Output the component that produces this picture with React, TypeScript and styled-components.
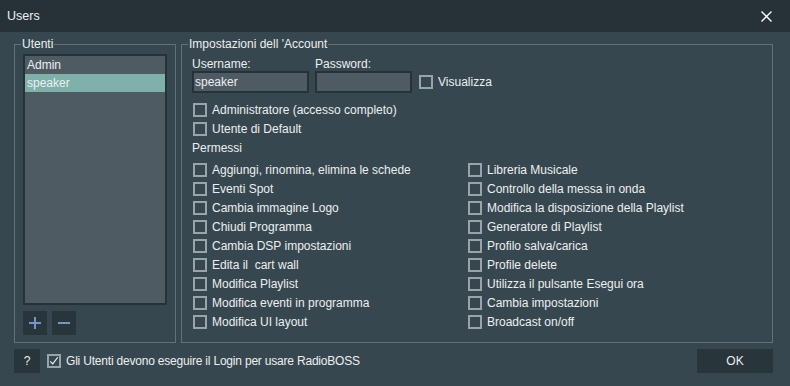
import React, { useState } from 'react';
import styled, { createGlobalStyle } from 'styled-components';

const colors = {
  title: '#263238',
  body: '#37474f',
  field: '#4f5b62',
  fieldBorder: '#263238',
  groupBorder: '#627279',
  text: '#eceff0',
  check: '#9aa3a8',
  selected: '#7fb0aa',
  button: '#28353b',
  icon: '#7196cc',
};

const GlobalStyle = createGlobalStyle`
  html, body {
    margin: 0;
    padding: 0;
    background: ${colors.body};
  }
  body {
    font-family: "Liberation Sans", Arial, sans-serif;
    font-size: 12px;
    color: ${colors.text};
  }
  * {
    box-sizing: border-box;
  }
`;

const Window = styled.div`
  width: 790px;
  height: 386px;
  display: flex;
  flex-direction: column;
  background: ${colors.body};
`;

const TitleBar = styled.div`
  height: 32px;
  flex: none;
  display: flex;
  align-items: center;
  justify-content: space-between;
  padding: 0 18px 0 7px;
  background: ${colors.title};
  font-size: 12.5px;
`;

const CloseButton = styled.div`
  width: 12px;
  height: 12px;
  display: flex;
  align-items: center;
  justify-content: center;
`;

const Body = styled.div`
  flex: 1;
  display: flex;
  flex-direction: column;
  padding: 5px 17px 0 14px;
`;

const MainRow = styled.div`
  display: flex;
  gap: 5px;
  height: 306px;
`;

const Group = styled.fieldset<{ $width?: number }>`
  margin: 0;
  padding: 0;
  min-width: 0;
  border: 1px solid ${colors.groupBorder};
  ${(p) => (p.$width ? `width: ${p.$width}px; flex: none;` : 'flex: 1;')}
`;

const Legend = styled.legend`
  margin-left: 6px;
  padding: 0 1px;
  line-height: 14px;
  height: 14px;
`;

const UsersInner = styled.div`
  padding: 3px 8px 7px 8px;
  display: flex;
  flex-direction: column;
`;

const UserList = styled.div`
  height: 251px;
  border: 2px solid ${colors.fieldBorder};
  background: ${colors.field};
`;

const UserItem = styled.div<{ $selected?: boolean }>`
  height: 18px;
  line-height: 18px;
  padding-left: 2px;
  background: ${(p) => (p.$selected ? colors.selected : 'transparent')};
`;

const ListButtons = styled.div`
  display: flex;
  gap: 5px;
  margin-top: 6px;
`;

const IconButton = styled.button`
  width: 24px;
  height: 24px;
  padding: 0;
  border: none;
  background: ${colors.button};
  display: flex;
  align-items: center;
  justify-content: center;
`;

const AccountInner = styled.div`
  padding: 6px 10px 0 10px;
  display: flex;
  flex-direction: column;
`;

const Credentials = styled.div`
  display: flex;
  align-items: flex-end;
`;

const Field = styled.div<{ $width: number; $gap?: number }>`
  width: ${(p) => p.$width}px;
  margin-left: ${(p) => p.$gap ?? 0}px;
  display: flex;
  flex-direction: column;
`;

const FieldLabel = styled.label`
  line-height: 14px;
  height: 14px;
`;

const TextInput = styled.input`
  height: 22px;
  width: 100%;
  border: 2px solid ${colors.fieldBorder};
  background: ${colors.field};
  color: ${colors.text};
  font: inherit;
  padding: 0 1px;
  outline: none;
`;

const CheckRow = styled.label<{ $top?: number; $left?: number; $height?: number }>`
  display: flex;
  align-items: center;
  gap: 5px;
  height: ${(p) => p.$height ?? 19}px;
  margin-top: ${(p) => p.$top ?? 0}px;
  margin-left: ${(p) => p.$left ?? 1}px;
  white-space: pre;
`;

const Box = styled.span`
  width: 14px;
  height: 14px;
  flex: none;
  border: 2px solid ${colors.check};
  display: flex;
  align-items: center;
  justify-content: center;
`;

const SectionLabel = styled.div`
  line-height: 14px;
  height: 14px;
  margin-top: 3px;
`;

const PermGrid = styled.div`
  display: grid;
  grid-template-columns: 275px 275px;
  grid-template-rows: repeat(9, 19px);
  grid-auto-flow: column;
  margin-top: 5px;
`;

const BottomRow = styled.div`
  display: flex;
  align-items: center;
  margin-top: 6px;
  height: 24px;
`;

const BottomText = styled.span`
  letter-spacing: -0.2px;
`;

const DialogButton = styled.button<{ $width: number }>`
  width: ${(p) => p.$width}px;
  height: 24px;
  border: none;
  padding: 0;
  background: ${colors.button};
  color: ${colors.text};
  font: inherit;
`;

const Spacer = styled.div`
  flex: 1;
`;

const Checkbox: React.FC<{ checked?: boolean }> = ({ checked }) => (
  <Box>
    {checked && (
      <svg width="12" height="12" viewBox="0 0 12 12">
        <path d="M1.5 6.5 L4.5 9.5 L10.5 1.5" fill="none" stroke="#f2f4f5" strokeWidth="1.4" />
      </svg>
    )}
  </Box>
);

const leftPerms = [
  'Aggiungi, rinomina, elimina le schede',
  'Eventi Spot',
  'Cambia immagine Logo',
  'Chiudi Programma',
  'Cambia DSP impostazioni',
  'Edita il  cart wall',
  'Modifica Playlist',
  'Modifica eventi in programma',
  'Modifica UI layout',
];

const rightPerms = [
  'Libreria Musicale',
  'Controllo della messa in onda',
  'Modifica la disposizione della Playlist',
  'Generatore di Playlist',
  'Profilo salva/carica',
  'Profile delete',
  'Utilizza il pulsante Esegui ora',
  'Cambia impostazioni',
  'Broadcast on/off',
];

const App: React.FC = () => {
  const [selected, setSelected] = useState('speaker');
  const users = ['Admin', 'speaker'];

  return (
    <>
      <GlobalStyle />
      <Window>
        <TitleBar>
          <span>Users</span>
          <CloseButton>
            <svg width="11" height="11" viewBox="0 0 11 11">
              <path d="M0.5 0.5 L10.5 10.5 M10.5 0.5 L0.5 10.5" stroke="#ffffff" strokeWidth="1.3" />
            </svg>
          </CloseButton>
        </TitleBar>
        <Body>
          <MainRow>
            <Group $width={162}>
              <Legend>Utenti</Legend>
              <UsersInner>
                <UserList>
                  {users.map((u) => (
                    <UserItem key={u} $selected={u === selected} onClick={() => setSelected(u)}>
                      {u}
                    </UserItem>
                  ))}
                </UserList>
                <ListButtons>
                  <IconButton>
                    <svg width="12" height="12" viewBox="0 0 12 12">
                      <path d="M6 0 V12 M0 6 H12" stroke={colors.icon} strokeWidth="2" />
                    </svg>
                  </IconButton>
                  <IconButton>
                    <svg width="12" height="12" viewBox="0 0 12 12">
                      <path d="M0 6 H12" stroke={colors.icon} strokeWidth="2" />
                    </svg>
                  </IconButton>
                </ListButtons>
              </UsersInner>
            </Group>
            <Group>
              <Legend>Impostazioni dell 'Account</Legend>
              <AccountInner>
                <Credentials>
                  <Field $width={117}>
                    <FieldLabel>Username:</FieldLabel>
                    <TextInput defaultValue={selected} />
                  </Field>
                  <Field $width={97} $gap={6}>
                    <FieldLabel>Password:</FieldLabel>
                    <TextInput type="password" />
                  </Field>
                  <CheckRow $left={7} $height={22}>
                    <Checkbox />
                    <span>Visualizza</span>
                  </CheckRow>
                </Credentials>
                <CheckRow $top={7}>
                  <Checkbox />
                  <span>Administratore (accesso completo)</span>
                </CheckRow>
                <CheckRow>
                  <Checkbox />
                  <span>Utente di Default</span>
                </CheckRow>
                <SectionLabel>Permessi</SectionLabel>
                <PermGrid>
                  {[...leftPerms, ...rightPerms].map((p) => (
                    <CheckRow key={p}>
                      <Checkbox />
                      <span>{p}</span>
                    </CheckRow>
                  ))}
                </PermGrid>
              </AccountInner>
            </Group>
          </MainRow>
          <BottomRow>
            <DialogButton $width={26}>?</DialogButton>
            <CheckRow $left={7} $height={24}>
              <Checkbox checked />
              <BottomText>Gli Utenti devono eseguire il Login per usare RadioBOSS</BottomText>
            </CheckRow>
            <Spacer />
            <DialogButton $width={76}>OK</DialogButton>
          </BottomRow>
        </Body>
      </Window>
    </>
  );
};

export default App;
